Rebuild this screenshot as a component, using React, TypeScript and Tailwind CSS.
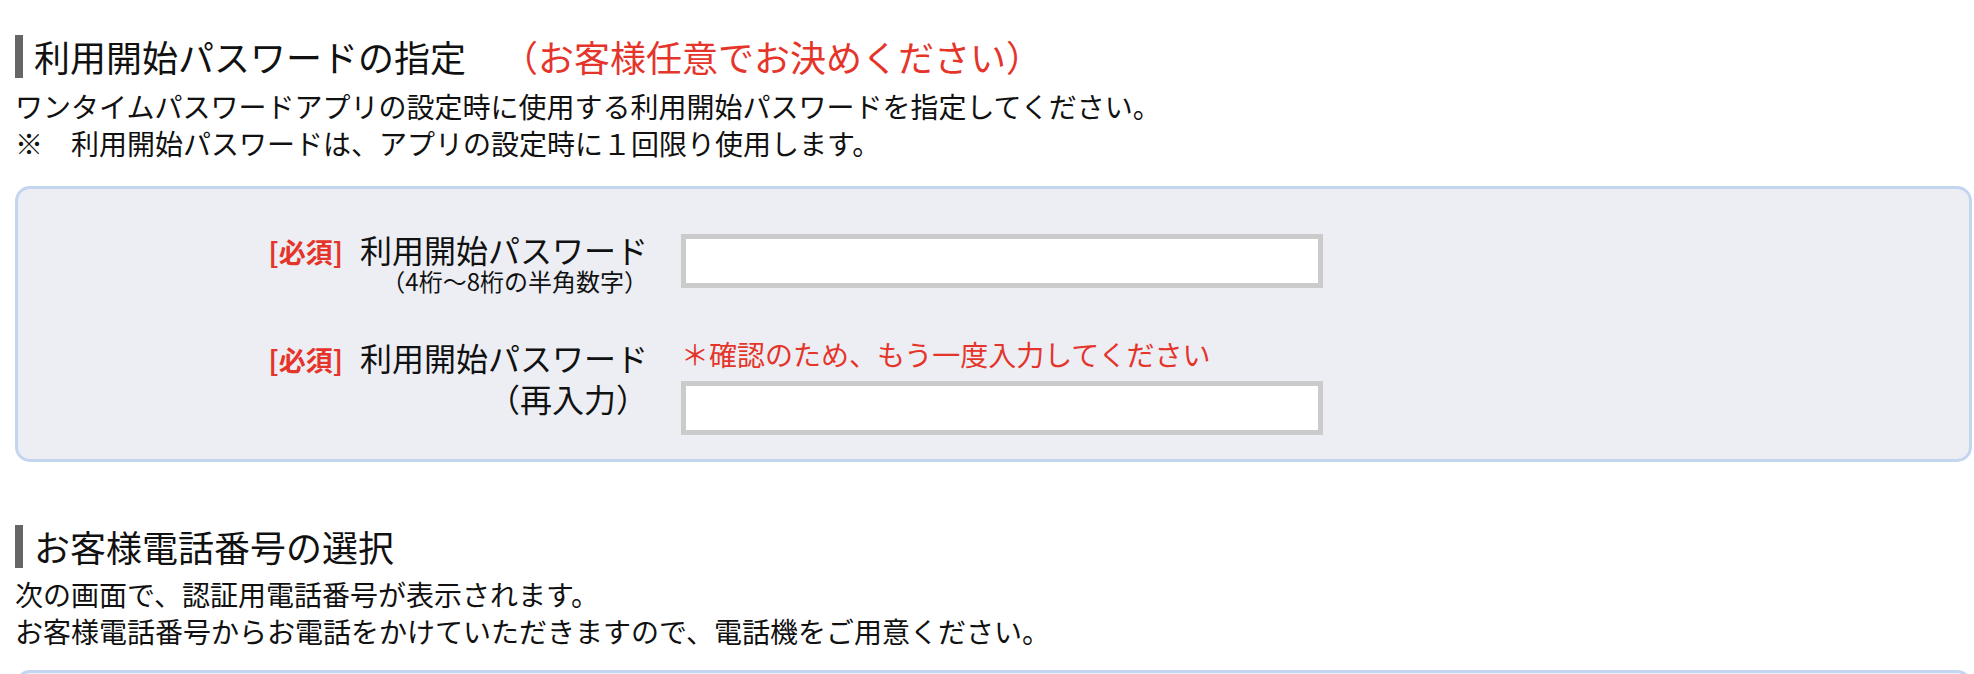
import React from 'react';

const RED = 'text-[#e5352b]';

// 見出し（左の縦バー付き）
const Heading = ({ children }: { children: React.ReactNode }) => (
  <div className="flex items-center h-[43px]">
    <span className="w-[8px] h-[43px] bg-[#666666] shrink-0" />
    <h2 className="ml-[11px] text-[36px] leading-[43px] font-normal text-[#111]">{children}</h2>
  </div>
);

const Required = () => (
  <span className={`text-[27px] leading-[27px] font-bold mr-[17px] ${RED}`}>[必須]</span>
);

const PasswordInput = ({ className = '' }: { className?: string }) => (
  <input
    type="password"
    className={`block w-[642px] h-[54px] border-[5px] border-[#cbcbcb] bg-white outline-none ${className}`}
  />
);

export default function App() {
  return (
    <div
      className="min-h-screen bg-white text-[#111] pl-[15px] pr-[2px] pt-[35px]"
      style={{ fontFamily: '"Noto Sans CJK JP", "Noto Sans", sans-serif' }}
    >
      {/* 利用開始パスワード */}
      <Heading>
        利用開始パスワードの指定
        <span className={`ml-[36px] ${RED}`}>（お客様任意でお決めください）</span>
      </Heading>
      <div className="mt-[10px] text-[28px] leading-[37px]">
        <p>ワンタイムパスワードアプリの設定時に使用する利用開始パスワードを指定してください。</p>
        <p>※　利用開始パスワードは、アプリの設定時に１回限り使用します。</p>
      </div>

      <div className="mt-[24px] rounded-[15px] border-[3px] border-[#c4d5f0] bg-[#eceef4] pt-[43px] pb-[24px]">
        <div className="grid grid-cols-[630px_642px] gap-x-[33px] gap-y-[42px]">
          <div className="text-right">
            <div className="text-[32px] leading-[35px] h-[35px]">
              <Required />
              利用開始パスワード
            </div>
            <div className="text-[24px] leading-[28px]">（4桁〜8桁の半角数字）</div>
          </div>
          <div>
            <PasswordInput className="mt-[2px]" />
          </div>

          <div className="text-right text-[32px] leading-[41px]">
            <div className="h-[41px]">
              <Required />
              利用開始パスワード
            </div>
            <div>（再入力）</div>
          </div>
          <div>
            <p className={`text-[28px] leading-[34px] ${RED}`}>＊確認のため、もう一度入力してください</p>
            <PasswordInput className="mt-[10px]" />
          </div>
        </div>
      </div>

      {/* お客様電話番号 */}
      <div className="mt-[63px]">
        <Heading>お客様電話番号の選択</Heading>
      </div>
      <div className="mt-[8px] text-[28px] leading-[37px]">
        <p>次の画面で、認証用電話番号が表示されます。</p>
        <p>お客様電話番号からお電話をかけていただきますので、電話機をご用意ください。</p>
      </div>

      <div className="mt-[20px] h-[200px] rounded-[15px] border-[3px] border-[#c4d5f0] bg-[#eceef4]" />
    </div>
  );
}
